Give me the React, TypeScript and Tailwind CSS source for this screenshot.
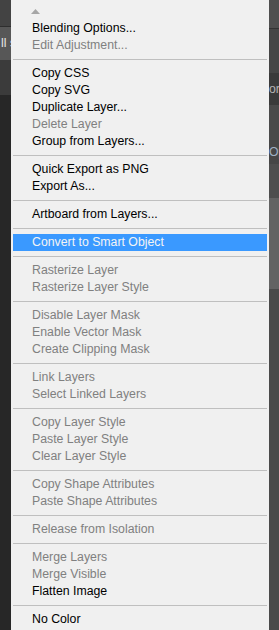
import React from 'react';

type Entry =
  | { kind: 'sep' }
  | { kind: 'item'; label: string; disabled?: boolean; active?: boolean };

const item = (label: string, disabled = false, active = false): Entry => ({
  kind: 'item',
  label,
  disabled,
  active,
});
const sep: Entry = { kind: 'sep' };

const entries: Entry[] = [
  item('Blending Options...'),
  item('Edit Adjustment...', true),
  sep,
  item('Copy CSS'),
  item('Copy SVG'),
  item('Duplicate Layer...'),
  item('Delete Layer', true),
  item('Group from Layers...'),
  sep,
  item('Quick Export as PNG'),
  item('Export As...'),
  sep,
  item('Artboard from Layers...'),
  sep,
  item('Convert to Smart Object', false, true),
  sep,
  item('Rasterize Layer', true),
  item('Rasterize Layer Style', true),
  sep,
  item('Disable Layer Mask', true),
  item('Enable Vector Mask', true),
  item('Create Clipping Mask', true),
  sep,
  item('Link Layers', true),
  item('Select Linked Layers', true),
  sep,
  item('Copy Layer Style', true),
  item('Paste Layer Style', true),
  item('Clear Layer Style', true),
  sep,
  item('Copy Shape Attributes', true),
  item('Paste Shape Attributes', true),
  sep,
  item('Release from Isolation', true),
  sep,
  item('Merge Layers', true),
  item('Merge Visible', true),
  item('Flatten Image'),
  sep,
  item('No Color'),
];

export default function App() {
  return (
    <div
      className="flex h-[630px] w-[279px] overflow-hidden bg-[#272727] text-[12.3px]"
      style={{ fontFamily: '"Liberation Sans", Arial, sans-serif' }}
    >
      {/* left edge of the workspace */}
      <div className="flex w-[11px] shrink-0 flex-col">
        <div className="h-[26px] bg-[#434343]" />
        <div className="h-px bg-[#2e2e2e]" />
        <div className="flex h-[33px] items-center overflow-hidden whitespace-nowrap bg-[#575757] pl-px leading-none text-[#e6e6e6]">
          ll s
        </div>
        <div className="h-[35px] bg-[#3b3b3b]" />
        <div className="flex-1 bg-[#272727]" />
      </div>

      {/* context menu */}
      <div className="w-[258px] shrink-0 bg-[#f0f0f0] px-[2px]">
        <div className="flex h-[20px] items-start pl-[18px] pt-[9px]">
          <svg width="9" height="5" viewBox="0 0 9 5">
            <polygon points="0,5 4.5,0 9,5" fill="#a6a6a6" />
          </svg>
        </div>
        {entries.map((e, i) =>
          e.kind === 'sep' ? (
            <div key={i} className="py-[5px]">
              <div className="h-px bg-[#bfbfbf]" />
            </div>
          ) : (
            <div
              key={i}
              className={`h-[17px] whitespace-nowrap pl-[19px] leading-[17px] ${
                e.active
                  ? 'bg-[#3a99ff] text-[#f4f4f4]'
                  : e.disabled
                    ? 'text-[#808080]'
                    : 'text-black'
              }`}
            >
              {e.label}
            </div>
          )
        )}
      </div>

      {/* right edge of the workspace */}
      <div className="flex w-[10px] shrink-0">
        <div className="w-[2px] bg-[#2f2f2f]" />
        <div className="flex flex-1 flex-col">
          <div className="h-[28px] bg-[#4f4f4f]" />
          <div className="h-px bg-[#333333]" />
          <div className="h-[44px] bg-[#464646]" />
          <div className="flex h-[32px] items-center overflow-hidden whitespace-nowrap bg-[#3a3a3a] leading-none text-[#b4b4b4]">
            or
          </div>
          <div className="h-[35px] bg-[#4a4a4a]" />
          <div className="flex h-[24px] items-center overflow-hidden whitespace-nowrap bg-[#464646] leading-none text-[#9fb1c4]">
            Op
          </div>
          <div className="h-[34px] bg-[#4e4e4e]" />
          <div className="h-[91px] bg-[#636363]" />
          <div className="flex-1 bg-[#4a4a4a]" />
        </div>
      </div>
    </div>
  );
}
